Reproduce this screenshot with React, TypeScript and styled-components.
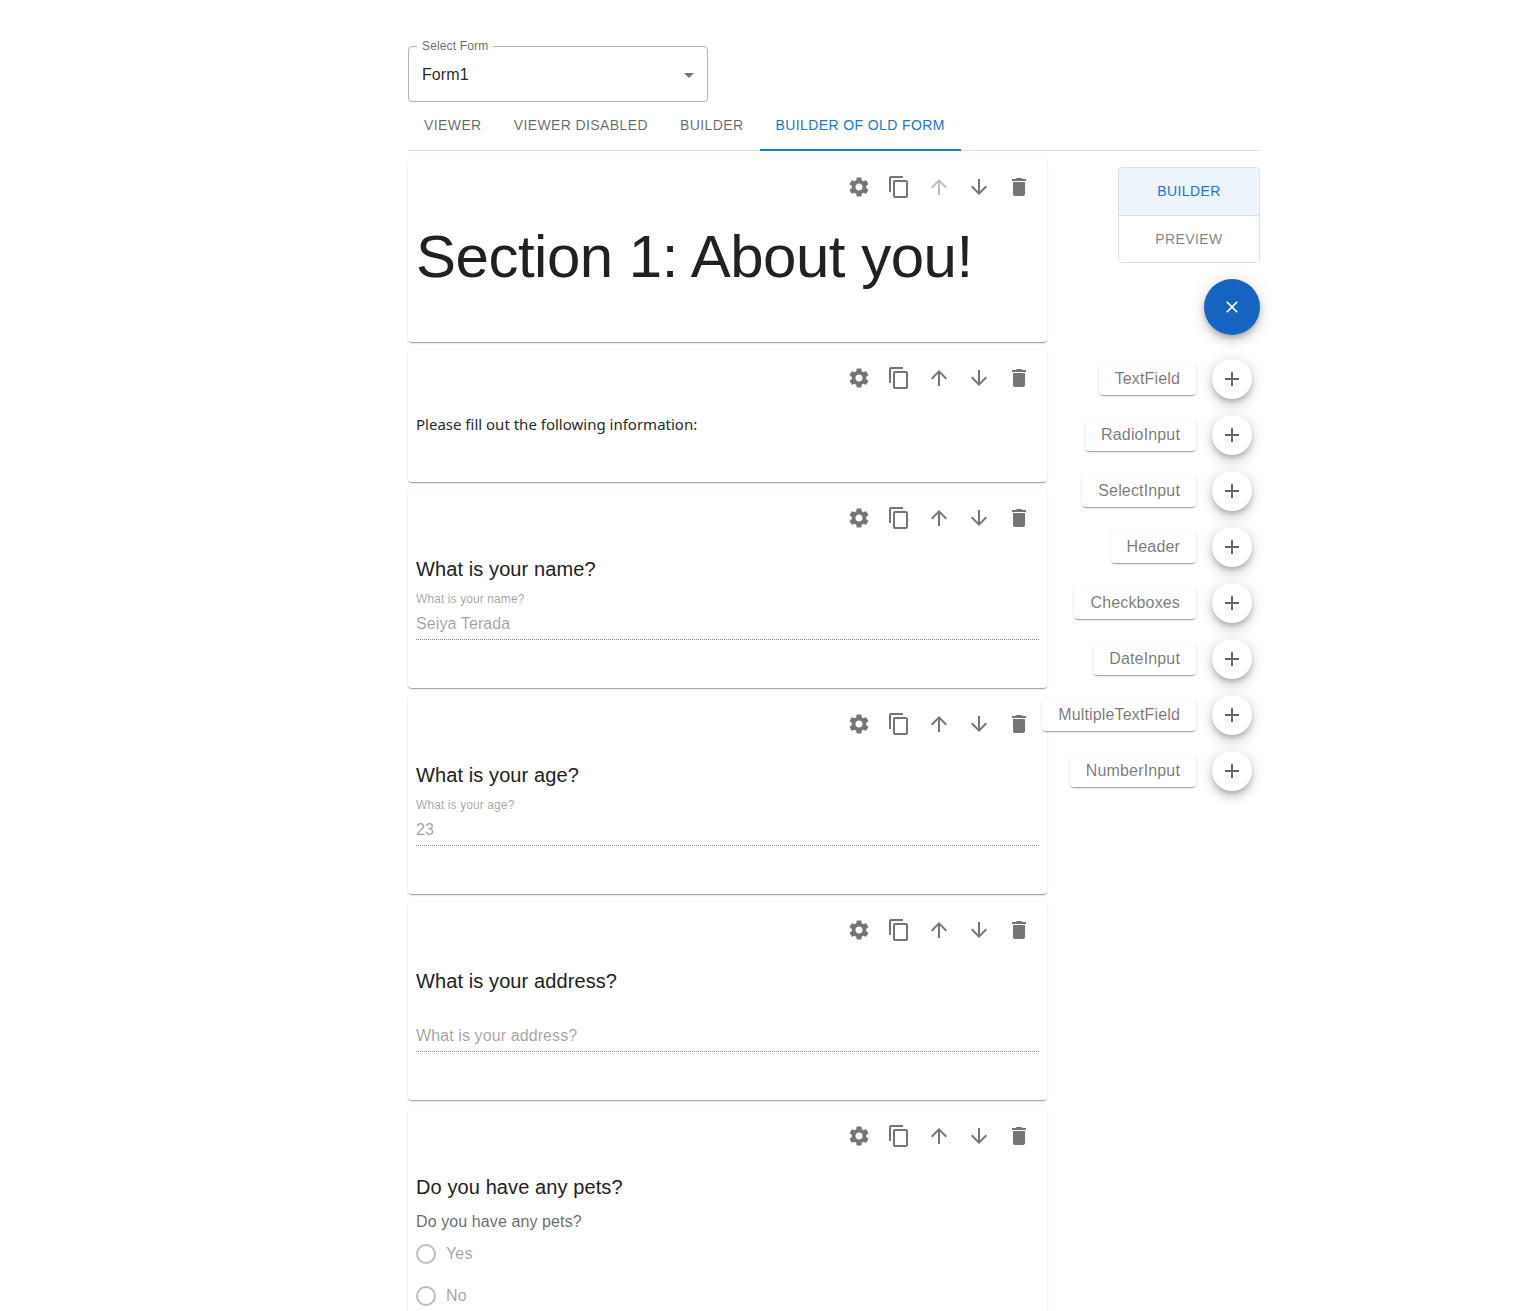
import { createGlobalStyle } from 'styled-components'
import styled from 'styled-components'

const GlobalStyle = createGlobalStyle`
    html, body {
        margin: 0;
        height: 1311px;
        overflow: hidden;
        background: #fff;
    }
    body {
        font-family: "Liberation Sans", Arial, sans-serif;
        color: rgba(0, 0, 0, 0.87);
    }
    * { box-sizing: border-box; }
`

const Page = styled.div`
    width: 852px;
    margin-left: 408px;
    padding-top: 46px;
`

const SelectBox = styled.div`
    position: relative;
    width: 300px;
    height: 56px;
    border: 1px solid rgba(0, 0, 0, 0.3);
    border-radius: 4px;
    display: flex;
    align-items: center;
    justify-content: space-between;
    padding: 1px 6px 0 13px;
    font-size: 16px;
    letter-spacing: 0.1px;
`

const SelectLabel = styled.span`
    position: absolute;
    top: -7px;
    left: 8px;
    padding: 0 5px;
    background: #fff;
    font-size: 12px;
    line-height: 12px;
    letter-spacing: 0.15px;
    color: rgba(0, 0, 0, 0.6);
`

const Tabs = styled.div`
    display: flex;
    height: 49px;
    border-bottom: 1px solid #e0e0e0;
`

const Tab = styled.div<{ $active?: boolean }>`
    height: 49px;
    padding: 0 16px ${(p) => (p.$active ? 1 : 3)}px;
    display: flex;
    align-items: center;
    font-size: 14px;
    letter-spacing: 0.4px;
    color: ${(p) => (p.$active ? '#1976d2' : 'rgba(0, 0, 0, 0.6)')};
    border-bottom: ${(p) => (p.$active ? '2px solid #1976d2' : 'none')};
`

const Columns = styled.div`
    display: flex;
    justify-content: space-between;
    align-items: flex-start;
    padding-top: 8px;
`

const Cards = styled.div`
    width: 639px;
    display: flex;
    flex-direction: column;
    gap: 8px;
`

const Card = styled.div<{ $height: number }>`
    height: ${(p) => p.$height}px;
    flex-shrink: 0;
    padding: 8px;
    border-radius: 4px;
    background: #fff;
    box-shadow: 0 2px 1px -1px rgba(0, 0, 0, 0.2), 0 1px 1px 0 rgba(0, 0, 0, 0.14), 0 1px 3px 0 rgba(0, 0, 0, 0.12);
`

const CardActions = styled.div`
    display: flex;
    justify-content: flex-end;
    height: 40px;
`

const ActionButton = styled.div`
    width: 40px;
    height: 40px;
    display: flex;
    align-items: center;
    justify-content: center;
`

const Icon = styled.svg<{ $size?: number; $color?: string }>`
    width: ${(p) => p.$size ?? 24}px;
    height: ${(p) => p.$size ?? 24}px;
    fill: ${(p) => p.$color ?? 'rgba(0, 0, 0, 0.54)'};
    display: block;
`

const BigTitle = styled.h1`
    margin: 15px 0 0;
    font-size: 60px;
    font-weight: 400;
    line-height: 70px;
    letter-spacing: -0.5px;
    color: #212121;
`

const Note = styled.p`
    margin: 16px 0 0;
    font-family: "Noto Sans", "Open Sans", sans-serif;
    font-size: 15px;
    line-height: 20px;
    color: #2a2a2a;
`

const Question = styled.h3`
    margin: 20px 0 0;
    font-size: 20px;
    font-weight: 400;
    line-height: 23px;
    letter-spacing: 0.1px;
    color: #212121;
`

const Field = styled.div`
    display: flow-root;
    margin-top: 11px;
    height: 48px;
    border-bottom: 1px dotted rgba(0, 0, 0, 0.5);
`

const FieldLabel = styled.div`
    font-size: 12px;
    line-height: 14px;
    letter-spacing: 0.1px;
    color: rgba(0, 0, 0, 0.38);
`

const FieldValue = styled.div<{ $top: number }>`
    margin-top: ${(p) => p.$top}px;
    font-size: 16px;
    line-height: 19px;
    letter-spacing: 0.1px;
    color: rgba(0, 0, 0, 0.38);
`

const GroupLabel = styled.div`
    margin-top: 13px;
    font-size: 16px;
    line-height: 19px;
    letter-spacing: 0.1px;
    color: rgba(0, 0, 0, 0.6);
`

const RadioList = styled.div`
    margin-top: 2px;
`

const RadioRow = styled.div`
    display: flex;
    align-items: center;
    gap: 10px;
    height: 42px;
    font-size: 16px;
    letter-spacing: 0.15px;
    color: rgba(0, 0, 0, 0.38);
`

const RadioCircle = styled.span`
    width: 20px;
    height: 20px;
    border: 2px solid rgba(0, 0, 0, 0.26);
    border-radius: 50%;
`

const Side = styled.div`
    width: 142px;
    padding-top: 8px;
    display: flex;
    flex-direction: column;
    align-items: flex-end;
`

const Toggle = styled.div`
    width: 142px;
    border: 1px solid #e0e0e0;
    border-radius: 4px;
    overflow: hidden;
`

const ToggleItem = styled.div<{ $active?: boolean }>`
    height: ${(p) => (p.$active ? 48 : 46)}px;
    padding-bottom: ${(p) => (p.$active ? 2 : 0)}px;
    display: flex;
    align-items: center;
    justify-content: center;
    font-size: 14px;
    letter-spacing: 0.4px;
    color: ${(p) => (p.$active ? '#1976d2' : 'rgba(0, 0, 0, 0.5)')};
    background: ${(p) => (p.$active ? '#edf4fb' : '#fff')};
    border-bottom: ${(p) => (p.$active ? '1px solid #d5dde6' : 'none')};
`

const MainFab = styled.div`
    width: 56px;
    height: 56px;
    margin-top: 16px;
    border-radius: 50%;
    background: #1565c0;
    display: flex;
    align-items: center;
    justify-content: center;
    box-shadow: 0 3px 5px -1px rgba(0, 0, 0, 0.2), 0 6px 10px 0 rgba(0, 0, 0, 0.14), 0 1px 18px 0 rgba(0, 0, 0, 0.12);
`

const AddList = styled.div`
    display: flex;
    flex-direction: column;
    margin-top: 24px;
    padding-right: 8px;
    gap: 16px;
`

const AddRow = styled.div`
    position: relative;
    width: 40px;
    height: 40px;
`

const SmallFab = styled.div`
    width: 40px;
    height: 40px;
    border-radius: 50%;
    background: #fff;
    display: flex;
    align-items: center;
    justify-content: center;
    box-shadow: 0 3px 5px -1px rgba(0, 0, 0, 0.2), 0 6px 10px 0 rgba(0, 0, 0, 0.14), 0 1px 18px 0 rgba(0, 0, 0, 0.12);
`

const AddLabel = styled.span`
    position: absolute;
    top: 4px;
    right: 56px;
    height: 32px;
    padding: 0 16px;
    display: flex;
    align-items: center;
    border-radius: 4px;
    background: #fff;
    font-size: 16px;
    letter-spacing: 0.15px;
    white-space: nowrap;
    color: rgba(0, 0, 0, 0.54);
    box-shadow: 0 2px 1px -1px rgba(0, 0, 0, 0.2), 0 1px 1px 0 rgba(0, 0, 0, 0.14), 0 1px 3px 0 rgba(0, 0, 0, 0.12);
`

const paths = {
    settings: 'M19.14 12.94c.04-.3.06-.61.06-.94 0-.32-.02-.64-.07-.94l2.03-1.58c.18-.14.23-.41.12-.61l-1.92-3.32c-.12-.22-.37-.29-.59-.22l-2.39.96c-.5-.38-1.03-.7-1.62-.94l-.36-2.54c-.04-.24-.24-.41-.48-.41h-3.84c-.24 0-.43.17-.47.41l-.36 2.54c-.59.24-1.13.57-1.62.94l-2.39-.96c-.22-.08-.47 0-.59.22L2.74 8.87c-.12.21-.08.47.12.61l2.03 1.58c-.05.3-.09.63-.09.94s.02.64.07.94l-2.03 1.58c-.18.14-.23.41-.12.61l1.92 3.32c.12.22.37.29.59.22l2.39-.96c.5.38 1.03.7 1.62.94l.36 2.54c.05.24.24.41.48.41h3.84c.24 0 .44-.17.47-.41l.36-2.54c.59-.24 1.13-.56 1.62-.94l2.39.96c.22.08.47 0 .59-.22l1.92-3.32c.12-.22.07-.47-.12-.61l-2.01-1.58zM12 15.6c-1.98 0-3.6-1.62-3.6-3.6s1.62-3.6 3.6-3.6 3.6 1.62 3.6 3.6-1.62 3.6-3.6 3.6z',
    copy: 'M16 1H4c-1.1 0-2 .9-2 2v14h2V3h12V1zm3 4H8c-1.1 0-2 .9-2 2v14c0 1.1.9 2 2 2h11c1.1 0 2-.9 2-2V7c0-1.1-.9-2-2-2zm0 16H8V7h11v14z',
    up: 'M4 12l1.41 1.41L11 7.83V20h2V7.83l5.58 5.59L20 12l-8-8-8 8z',
    down: 'M20 12l-1.41-1.41L13 16.17V4h-2v12.17l-5.58-5.59L4 12l8 8 8-8z',
    trash: 'M6 19c0 1.1.9 2 2 2h8c1.1 0 2-.9 2-2V7H6v12zM19 4h-3.5l-1-1h-5l-1 1H5v2h14V4z',
    close: 'M19 6.41L17.59 5 12 10.59 6.41 5 5 6.41 10.59 12 5 17.59 6.41 19 12 13.41 17.59 19 19 17.59 13.41 12z',
    add: 'M19 13h-6v6h-2v-6H5v-2h6V5h2v6h6v2z',
    caret: 'M7 10l5 5 5-5z',
}

const MuiIcon = ({ d, size, color }: { d: string; size?: number; color?: string }) => (
    <Icon viewBox="0 0 24 24" $size={size} $color={color}>
        <path d={d} />
    </Icon>
)

const Actions = ({ firstCard }: { firstCard?: boolean }) => (
    <CardActions>
        <ActionButton><MuiIcon d={paths.settings} /></ActionButton>
        <ActionButton><MuiIcon d={paths.copy} /></ActionButton>
        <ActionButton><MuiIcon d={paths.up} color={firstCard ? 'rgba(0, 0, 0, 0.26)' : undefined} /></ActionButton>
        <ActionButton><MuiIcon d={paths.down} /></ActionButton>
        <ActionButton><MuiIcon d={paths.trash} /></ActionButton>
    </CardActions>
)

const addItems = ['TextField', 'RadioInput', 'SelectInput', 'Header', 'Checkboxes', 'DateInput', 'MultipleTextField', 'NumberInput']

export default function App() {
    return (
        <>
            <GlobalStyle />
            <Page>
                <SelectBox>
                    <SelectLabel>Select Form</SelectLabel>
                    Form1
                    <MuiIcon d={paths.caret} />
                </SelectBox>
                <Tabs>
                    <Tab>VIEWER</Tab>
                    <Tab>VIEWER DISABLED</Tab>
                    <Tab>BUILDER</Tab>
                    <Tab $active>BUILDER OF OLD FORM</Tab>
                </Tabs>
                <Columns>
                    <Cards>
                        <Card $height={183}>
                            <Actions firstCard />
                            <BigTitle>Section 1: About you!</BigTitle>
                        </Card>
                        <Card $height={132}>
                            <Actions />
                            <Note>Please fill out the following information:</Note>
                        </Card>
                        <Card $height={198}>
                            <Actions />
                            <Question>What is your name?</Question>
                            <Field>
                                <FieldLabel>What is your name?</FieldLabel>
                                <FieldValue $top={8}>Seiya Terada</FieldValue>
                            </Field>
                        </Card>
                        <Card $height={198}>
                            <Actions />
                            <Question>What is your age?</Question>
                            <Field>
                                <FieldLabel>What is your age?</FieldLabel>
                                <FieldValue $top={8}>23</FieldValue>
                            </Field>
                        </Card>
                        <Card $height={198}>
                            <Actions />
                            <Question>What is your address?</Question>
                            <Field>
                                <FieldValue $top={22}>What is your address?</FieldValue>
                            </Field>
                        </Card>
                        <Card $height={240}>
                            <Actions />
                            <Question>Do you have any pets?</Question>
                            <GroupLabel>Do you have any pets?</GroupLabel>
                            <RadioList>
                                <RadioRow><RadioCircle />Yes</RadioRow>
                                <RadioRow><RadioCircle />No</RadioRow>
                            </RadioList>
                        </Card>
                    </Cards>
                    <Side>
                        <Toggle>
                            <ToggleItem $active>BUILDER</ToggleItem>
                            <ToggleItem>PREVIEW</ToggleItem>
                        </Toggle>
                        <MainFab><MuiIcon d={paths.close} size={20} color="#fff" /></MainFab>
                        <AddList>
                            {addItems.map((item) => (
                                <AddRow key={item}>
                                    <AddLabel>{item}</AddLabel>
                                    <SmallFab><MuiIcon d={paths.add} color="rgba(0, 0, 0, 0.6)" /></SmallFab>
                                </AddRow>
                            ))}
                        </AddList>
                    </Side>
                </Columns>
            </Page>
        </>
    )
}
